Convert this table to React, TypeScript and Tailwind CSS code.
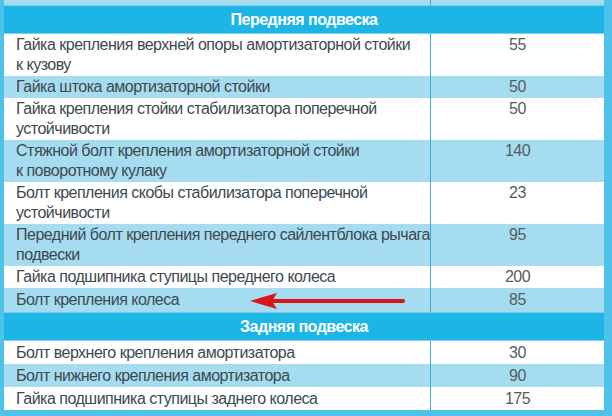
const front: { name: string[]; value: string }[] = [
  { name: ["Гайка крепления верхней опоры амортизаторной стойки", "к кузову"], value: "55" },
  { name: ["Гайка штока амортизаторной стойки"], value: "50" },
  { name: ["Гайка крепления стойки стабилизатора поперечной", "устойчивости"], value: "50" },
  { name: ["Стяжной болт крепления амортизаторной стойки", "к поворотному кулаку"], value: "140" },
  { name: ["Болт крепления скобы стабилизатора поперечной", "устойчивости"], value: "23" },
  { name: ["Передний болт крепления переднего сайлентблока рычага", "подвески"], value: "95" },
  { name: ["Гайка подшипника ступицы переднего колеса"], value: "200" },
  { name: ["Болт крепления колеса"], value: "85" },
]

const rear: { name: string[]; value: string }[] = [
  { name: ["Болт верхнего крепления амортизатора"], value: "30" },
  { name: ["Болт нижнего крепления амортизатора"], value: "90" },
  { name: ["Гайка подшипника ступицы заднего колеса"], value: "175" },
]

function Row({ name, value, shaded, arrow, tall }: { name: string[]; value: string; shaded: boolean; arrow?: boolean; tall?: boolean }) {
  const pad = arrow ? "py-[2px]" : "py-[1px]"
  const lead = tall ? "leading-[21px]" : "leading-[20px]"
  return (
    <div className={`relative flex ${shaded ? "bg-[#a6dcf0]" : "bg-white"}`}>
      <div className={`w-[426px] pl-[12px] whitespace-nowrap ${lead} ${pad}`}>
        {name.map((line, i) => (
          <div key={i}>{line}</div>
        ))}
      </div>
      <div className={`flex-1 border-l border-[#3fa9cf] text-center text-[#555c60] ${lead} ${pad}`}>{value}</div>
      {arrow && (
        <svg className="absolute left-[246px] top-[5px]" width="156" height="16" viewBox="0 0 156 16">
          <line x1="20" y1="8" x2="153" y2="8" stroke="#d81518" strokeWidth="4" strokeLinecap="round" />
          <polygon points="0,8 27,0 22,8 27,16" fill="#d81518" />
        </svg>
      )}
    </div>
  )
}

function Header({ title }: { title: string }) {
  return (
    <div className="h-[29px] bg-[#1db5e6] flex items-center justify-center text-white font-bold border-y border-[#7fcfeb]">
      {title}
    </div>
  )
}

export default function App() {
  return (
    <div
      className="w-[612px] h-[416px] overflow-hidden bg-[#4ec2e8] pl-[4px] pr-[8px] text-[#3d4950] text-[16px] tracking-[-0.5px]"
      style={{ fontFamily: '"Liberation Sans", Arial, sans-serif' }}
    >
      <div className="flex h-[5px] bg-[#a6dcf0]">
        <div className="w-[426px]" />
        <div className="flex-1 border-l border-[#3fa9cf]" />
      </div>
      <Header title="Передняя подвеска" />
      {front.map((r, i) => (
        <Row key={i} name={r.name} value={r.value} shaded={i % 2 === 1} arrow={i === front.length - 1} />
      ))}
      <Header title="Задняя подвеска" />
      {rear.map((r, i) => (
        <Row key={i} name={r.name} value={r.value} shaded={i % 2 === 1} tall />
      ))}
    </div>
  )
}
